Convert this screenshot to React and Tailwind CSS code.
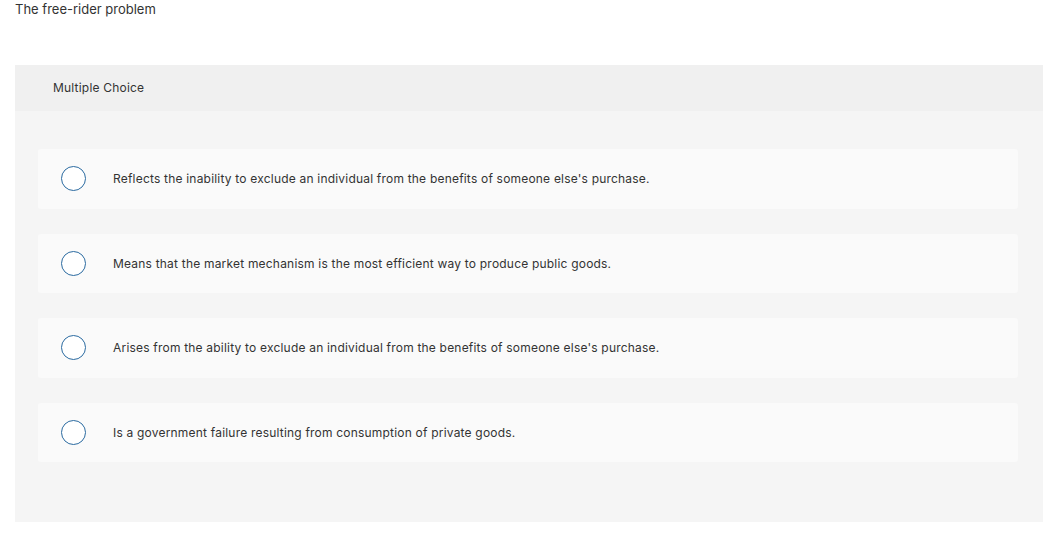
import React from "react";

const options = [
  "Reflects the inability to exclude an individual from the benefits of someone else's purchase.",
  "Means that the market mechanism is the most efficient way to produce public goods.",
  "Arises from the ability to exclude an individual from the benefits of someone else's purchase.",
  "Is a government failure resulting from consumption of private goods.",
];

export default function App() {
  return (
    <div className="bg-white w-[1052px] h-[541px] font-['Inter',sans-serif] text-[#333]">
      <div className="pl-[15px] pt-[1px] text-[13px] leading-[16px]">The free-rider problem</div>
      <div className="ml-[15px] mt-[48px] w-[1028px] bg-[#f5f5f5]">
        <div className="h-[46px] bg-[#f0f0f0] flex items-center pl-[38px] text-[12px] tracking-[0.2px]">Multiple Choice</div>
        <div className="pt-[38px] pb-[60px] pl-[23px] pr-[25px] flex flex-col gap-[25px]">
          {options.map((o, i) => (
            <div key={i} className="h-[59.5px] bg-[#fafafa] rounded-[3px] flex items-center">
              <div className="ml-[23px] w-[25px] h-[25px] rounded-full border-[1.5px] border-[#2a6aa0] bg-white shrink-0" />
              <div className="ml-[27px] text-[12px] tracking-[0.2px] pt-[1px]">{o}</div>
            </div>
          ))}
        </div>
      </div>
    </div>
  );
}
